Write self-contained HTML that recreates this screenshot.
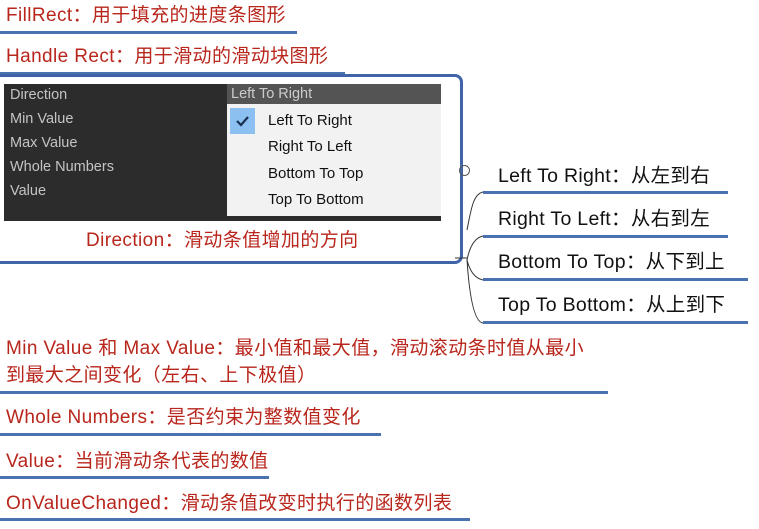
<!DOCTYPE html>
<html><head><meta charset="utf-8"><style>
body{margin:0;width:759px;height:529px;background:#fff;position:relative;overflow:hidden;font-family:"Liberation Sans","Noto Sans CJK SC",sans-serif}
.t{position:absolute;font-size:19px;color:#b8261c;white-space:nowrap;line-height:24px;letter-spacing:0.4px}
.k{position:absolute;font-size:19.5px;color:#111;white-space:nowrap;line-height:24px;letter-spacing:0.3px}
.u{position:absolute;height:3px;background:#4a72b0}
.p{position:absolute;left:4px;top:84px;width:437px;height:137px;background:#2c2c2c}
.p span{position:absolute;left:6px;color:#c4c4c4;font-size:14.5px}
.m span{position:absolute;left:41px;color:#111;font-size:15px}
</style></head><body>
<div class="t" style="left:6px;top:4px">FillRect：用于填充的进度条图形</div>
<div class="u" style="left:0;top:31px;width:297px"></div>
<div class="t" style="left:6px;top:45px">Handle Rect：用于滑动的滑动块图形</div>
<div class="u" style="left:0;top:72px;width:345px"></div>
<div style="position:absolute;left:-10px;top:74px;width:467px;height:184px;border:3px solid #3f64a8;border-radius:0 8px 8px 0"></div>
<div class="p">
<span style="top:3px">Direction</span><span style="top:27px">Min Value</span><span style="top:51px">Max Value</span><span style="top:75px">Whole Numbers</span><span style="top:99px">Value</span>
</div>
<div style="position:absolute;left:227px;top:84px;width:214px;height:20px;background:#545454;color:#ccc;font-size:14.5px;line-height:20px;padding-left:4px;box-sizing:border-box">Left To Right</div>
<div class="m" style="position:absolute;left:227px;top:104px;width:214px;height:112px;background:#f2f2f2">
<div style="position:absolute;left:3px;top:4px;width:25px;height:26px;background:#8cc0f0"><svg width="25" height="26"><path d="M7 13 L11 17 L18 9" stroke="#1a3050" stroke-width="2.2" fill="none"/></svg></div>
<span style="top:8px">Left To Right</span><span style="top:34px">Right To Left</span><span style="top:61px">Bottom To Top</span><span style="top:87px">Top To Bottom</span>
</div>
<div class="t" style="left:86px;top:229px">Direction：滑动条值增加的方向</div>
<div style="position:absolute;left:459px;top:165px;width:9px;height:9px;border:1px solid #555;border-radius:50%"></div>
<svg style="position:absolute;left:455px;top:190px" width="40" height="140"><path d="M28 2 C18 4 16 20 12 40 M28 46 C18 48 14 60 12 70 M28 90 C18 88 14 78 12 70 M28 133 C18 132 14 100 12 70 M0 68 H12" stroke="#333" fill="none" stroke-width="1"/></svg>
<div class="k" style="left:498px;top:164px">Left To Right：从左到右</div>
<div class="u" style="left:483px;top:191px;width:245px"></div>
<div class="k" style="left:498px;top:207px">Right To Left：从右到左</div>
<div class="u" style="left:483px;top:235px;width:245px"></div>
<div class="k" style="left:498px;top:250px">Bottom To Top：从下到上</div>
<div class="u" style="left:483px;top:278px;width:265px"></div>
<div class="k" style="left:498px;top:293px">Top To Bottom：从上到下</div>
<div class="u" style="left:483px;top:321px;width:265px"></div>
<div class="t" style="left:6px;top:337px">Min Value 和 Max Value：最小值和最大值，滑动滚动条时值从最小</div>
<div class="t" style="left:6px;top:364px">到最大之间变化（左右、上下极值）</div>
<div class="u" style="left:0;top:391px;width:608px"></div>
<div class="t" style="left:6px;top:406px">Whole Numbers：是否约束为整数值变化</div>
<div class="u" style="left:0;top:433px;width:381px"></div>
<div class="t" style="left:6px;top:450px">Value：当前滑动条代表的数值</div>
<div class="u" style="left:0;top:476px;width:269px"></div>
<div class="t" style="left:6px;top:492px">OnValueChanged：滑动条值改变时执行的函数列表</div>
<div class="u" style="left:0;top:518px;width:470px"></div>
</body></html>
